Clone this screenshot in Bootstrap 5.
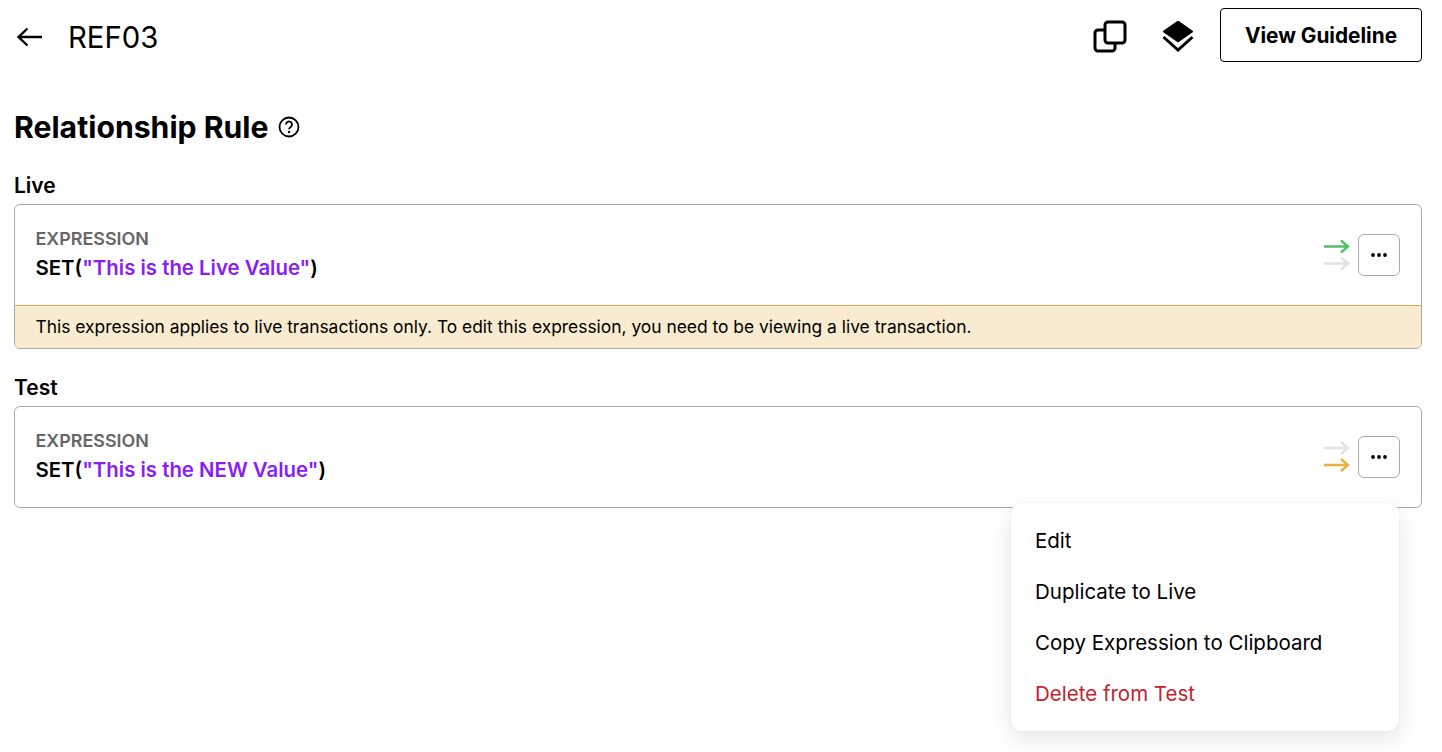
<!DOCTYPE html>
<html lang="en">
<head>
<meta charset="utf-8">
<title>REF03</title>
<link href="https://cdn.jsdelivr.net/npm/bootstrap@5.3.0/dist/css/bootstrap.min.css" rel="stylesheet">
<style>
body{font-family:"Inter","Noto Sans",sans-serif;color:#000;background:#fff;padding:8px 20px 0 14px;font-size:16px}
.top-bar{height:54px}
.back-icon,.copy-icon,.stack-icon{margin-top:4px}
.ref-title{margin-top:6px}
.back-icon{margin-left:1px;margin-right:23px}
.ref-title{font-size:29.3px;line-height:1;font-weight:400}
.copy-icon{margin-right:35px}
.stack-icon{margin-right:26px}
.guide-btn{width:202px;height:54px;border:1px solid #000;border-radius:4px;font-weight:700;font-size:20.8px;color:#000;background:#fff;padding:2px 0 0}
.rule-head{font-size:30.2px;font-weight:700;line-height:38px;margin-top:46px;margin-bottom:0}
.env-label{font-size:21px;font-weight:600;line-height:26px}
.label-live{margin-top:27px;margin-bottom:5px}
.label-test{margin-top:26px;margin-bottom:5px}
.expr-card{border:1px solid #aaa;border-radius:6px;overflow:hidden}
.expr-body{height:100px;padding:0 21px 0 20.500px}
.expr-text{margin-bottom:3px}
.expr-cap{font-size:17.9px;font-weight:600;color:#666;line-height:28px}
.expr-code{font-size:20.4px;font-weight:600;line-height:28px;padding-top:1px}
.str-val{color:#8a1cfa}
.dots-btn{width:42px;height:42px;border:1px solid #aaa;border-radius:6px;background:#fff;padding:0}
.expr-note{background:#f9ebd0;border-top:1px solid #e5ae4c;height:43px;padding:0 21px 0 20.500px;font-size:17.4px}
.test-wrap{position:relative}
.ctx-menu{position:absolute;top:97px;right:23px;left:auto;width:388px;height:228px;display:block;border:0;border-radius:10px;padding:13px 0 11px;box-shadow:0 0 1px rgba(0,0,0,.2),0 8px 24px rgba(0,0,0,.1)}
.ctx-menu .dropdown-item{height:51px;padding:0 24px;display:flex;align-items:center;font-size:20.5px;color:#000}
.ctx-menu .dropdown-item.danger-item{color:#c4232b}
</style>
</head>
<body class="min-vh-100">
<header class="top-bar d-flex align-items-center">
  <svg class="back-icon" width="30" height="24" viewBox="0 0 30 24" fill="none" stroke="#000" stroke-width="2.400" aria-hidden="true"><path d="M27 12H4M12.500 3.500 3.500 12l9 8.500"/></svg>
  <span class="ref-title">REF03</span>
  <svg class="copy-icon ms-auto" width="34" height="34" viewBox="0 0 34 34" fill="#fff" stroke="#000" stroke-width="3" aria-hidden="true"><rect x="2" y="10" width="20" height="21" rx="3"/><rect x="12" y="2" width="20" height="21" rx="3"/></svg>
  <svg class="stack-icon" width="32" height="32" viewBox="0 0 32 32" aria-hidden="true"><path d="M16 0 31 10.500 16 21 1 10.500Z" fill="#000" stroke="#000" stroke-linejoin="round"/><path d="M1.500 16 16 29 30.500 16" fill="none" stroke="#000" stroke-width="3"/></svg>
  <button type="button" class="btn guide-btn">View Guideline</button>
</header>
<h1 class="rule-head d-flex align-items-center">Relationship Rule
  <svg class="ms-2" width="24" height="24" viewBox="0 0 24 24" aria-hidden="true"><circle cx="12" cy="12" r="9.500" fill="none" stroke="#000" stroke-width="1.800"/><path d="M9 9.500a3 3 0 1 1 4.700 2.400c-1 .7-1.700 1.200-1.700 2.400" fill="none" stroke="#000" stroke-width="1.800"/><circle cx="12" cy="17" r="1.200"/></svg>
</h1>
<div class="env-label label-live">Live</div>
<section class="expr-card">
  <div class="expr-body d-flex align-items-center justify-content-between">
    <div class="expr-text">
      <div class="expr-cap">EXPRESSION</div>
      <div class="expr-code">SET(<span class="str-val">"This is the Live Value"</span>)</div>
    </div>
    <div class="d-flex align-items-center gap-2">
      <svg width="26" height="32" viewBox="0 0 26 32" fill="none" stroke-width="2.400" aria-hidden="true"><path stroke="#4fc167" d="M0 7.500h24M17 1.500l7 6-7 6"/><path stroke="#e2e2e2" d="M0 24.500h24M17 18.500l7 6-7 6"/></svg>
      <button type="button" class="dots-btn d-flex align-items-center justify-content-center" aria-label="More"><svg width="16" height="4" viewBox="0 0 16 4" aria-hidden="true"><circle cx="2" cy="2" r="1.900"/><circle cx="8" cy="2" r="1.900"/><circle cx="14" cy="2" r="1.900"/></svg></button>
    </div>
  </div>
  <div class="expr-note d-flex align-items-center">This expression applies to live transactions only. To edit this expression, you need to be viewing a live transaction.</div>
</section>
<div class="env-label label-test">Test</div>
<div class="test-wrap">
  <section class="expr-card">
    <div class="expr-body d-flex align-items-center justify-content-between">
      <div class="expr-text">
        <div class="expr-cap">EXPRESSION</div>
        <div class="expr-code">SET(<span class="str-val">"This is the NEW Value"</span>)</div>
      </div>
      <div class="d-flex align-items-center gap-2">
        <svg width="26" height="32" viewBox="0 0 26 32" fill="none" stroke-width="2.400" aria-hidden="true"><path stroke="#e2e2e2" d="M0 7h24M17 1l7 6-7 6"/><path stroke="#e8b03f" d="M0 24h24M17 18l7 6-7 6"/></svg>
        <button type="button" class="dots-btn d-flex align-items-center justify-content-center" aria-label="More"><svg width="16" height="4" viewBox="0 0 16 4" aria-hidden="true"><circle cx="2" cy="2" r="1.900"/><circle cx="8" cy="2" r="1.900"/><circle cx="14" cy="2" r="1.900"/></svg></button>
      </div>
    </div>
  </section>
  <div class="dropdown-menu ctx-menu">
    <a class="dropdown-item" href="#">Edit</a>
    <a class="dropdown-item" href="#">Duplicate to Live</a>
    <a class="dropdown-item" href="#">Copy Expression to Clipboard</a>
    <a class="dropdown-item danger-item" href="#">Delete from Test</a>
  </div>
</div>
<script src="https://cdn.jsdelivr.net/npm/bootstrap@5.3.0/dist/js/bootstrap.bundle.min.js"></script>
</body>
</html>
